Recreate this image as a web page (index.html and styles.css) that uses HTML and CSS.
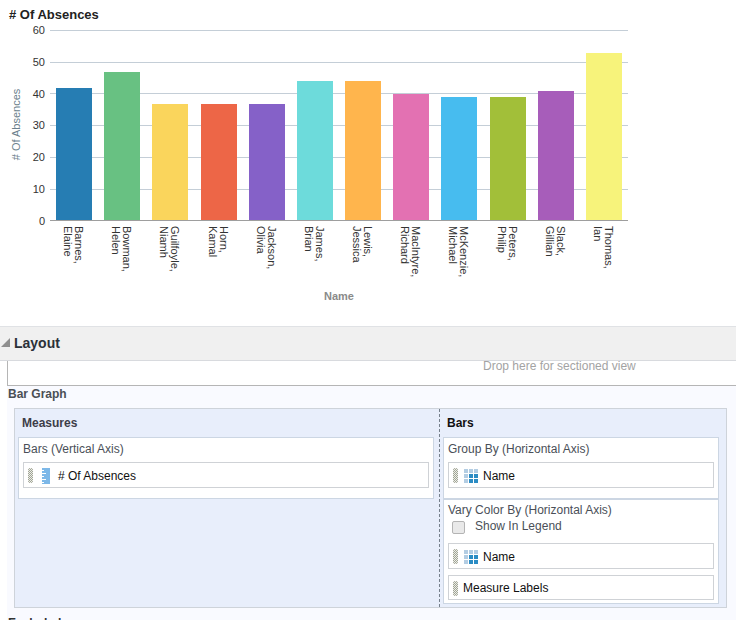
FILE: index.html
```html
<!DOCTYPE html>
<html lang="en">
<head>
    <meta charset="UTF-8">
    <title># Of Absences</title>
    <link rel="stylesheet" href="styles.css">
</head>
<body>

    <!-- Chart -->
    <section class="chart-area">
        <h2 class="chart-title"># Of Absences</h2>
        <svg class="chart" width="736" height="304" viewBox="0 22 736 304">
            <g class="grid">
                <line x1="50" x2="628" y1="30.5" y2="30.5"/>
                <line x1="50" x2="628" y1="62.5" y2="62.5"/>
                <line x1="50" x2="628" y1="93.5" y2="93.5"/>
                <line x1="50" x2="628" y1="125.5" y2="125.5"/>
                <line x1="50" x2="628" y1="157.5" y2="157.5"/>
                <line x1="50" x2="628" y1="189.5" y2="189.5"/>
            </g>
            <g class="ticks">
                <text x="45" y="34">60</text>
                <text x="45" y="66">50</text>
                <text x="45" y="98">40</text>
                <text x="45" y="129">30</text>
                <text x="45" y="161">20</text>
                <text x="45" y="193">10</text>
                <text x="45" y="225">0</text>
            </g>
            <rect x="56" y="88" width="36" height="133" fill="#267db3"/>
            <rect x="104" y="72" width="36" height="149" fill="#68c182"/>
            <rect x="152" y="104" width="36" height="117" fill="#fad55c"/>
            <rect x="201" y="104" width="36" height="117" fill="#ed6647"/>
            <rect x="249" y="104" width="36" height="117" fill="#8561c8"/>
            <rect x="297" y="81" width="36" height="140" fill="#6ddbdb"/>
            <rect x="345" y="81" width="36" height="140" fill="#ffb54d"/>
            <rect x="393" y="94" width="36" height="127" fill="#e371b2"/>
            <rect x="441" y="97" width="36" height="124" fill="#47bcef"/>
            <rect x="490" y="97" width="36" height="124" fill="#a2bf39"/>
            <rect x="538" y="91" width="36" height="130" fill="#a75dba"/>
            <rect x="586" y="53" width="36" height="168" fill="#f7f37b"/>
            <line class="axis" x1="50" x2="628" y1="220.5" y2="220.5"/>
            <text class="axis-title" transform="translate(20 124.5) rotate(-90)"># Of Absences</text>
            <g class="names">
                <text transform="translate(75 226) rotate(90)">Barnes,</text>
                <text transform="translate(64 226) rotate(90)">Elaine</text>
                <text transform="translate(123 226) rotate(90)">Bowman,</text>
                <text transform="translate(112 226) rotate(90)">Helen</text>
                <text transform="translate(171 226) rotate(90)">Guilfoyle,</text>
                <text transform="translate(160 226) rotate(90)">Niamh</text>
                <text transform="translate(220 226) rotate(90)">Horn,</text>
                <text transform="translate(209 226) rotate(90)">Kamal</text>
                <text transform="translate(268 226) rotate(90)">Jackson,</text>
                <text transform="translate(257 226) rotate(90)">Olivia</text>
                <text transform="translate(316 226) rotate(90)">James,</text>
                <text transform="translate(305 226) rotate(90)">Brian</text>
                <text transform="translate(364 226) rotate(90)">Lewis,</text>
                <text transform="translate(353 226) rotate(90)">Jessica</text>
                <text transform="translate(412 226) rotate(90)">MacIntyre,</text>
                <text transform="translate(401 226) rotate(90)">Richard</text>
                <text transform="translate(460 226) rotate(90)">McKenzie,</text>
                <text transform="translate(449 226) rotate(90)">Michael</text>
                <text transform="translate(509 226) rotate(90)">Peters,</text>
                <text transform="translate(498 226) rotate(90)">Philip</text>
                <text transform="translate(557 226) rotate(90)">Slack,</text>
                <text transform="translate(546 226) rotate(90)">Gillian</text>
                <text transform="translate(605 226) rotate(90)">Thomas,</text>
                <text transform="translate(594 226) rotate(90)">Ian</text>
            </g>
            <text class="x-title" x="339" y="300">Name</text>
        </svg>
    </section>

    <!-- Layout -->
    <header class="layout-header">
        <span class="disclosure"></span>
        <h3>Layout</h3>
    </header>

    <div class="layout-body">
        <div class="sections-drop">Drop here for sectioned view</div>
        <div class="graph-label">Bar Graph</div>

        <div class="drop-panel">
            <div class="measures-col">
                <div class="col-title">Measures</div>
                <div class="target">
                    <div class="target-label">Bars (Vertical Axis)</div>
                    <div class="slot">
                        <span class="grip"></span>
                        <svg class="icon measure-icon" width="8" height="16" viewBox="0 0 8 16">
                            <rect width="8" height="16" fill="#7db8e8"/>
                            <path d="M0 2.5h2M0 5.5h4M0 8.5h2M0 11.5h4M0 14.5h2" stroke="#fff" fill="none"/>
                        </svg>
                        <span># Of Absences</span>
                    </div>
                </div>
            </div>

            <div class="bars-col">
                <div class="col-title bars-title">Bars</div>
                <div class="target">
                    <div class="target-label">Group By (Horizontal Axis)</div>
                    <div class="slot">
                        <span class="grip"></span>
                        <svg class="icon" width="14" height="14" viewBox="0 0 14 14">
                            <path fill="#b3cde3" d="M0 0h4v4H0zM5 0h4v4H5zM10 0h4v4h-4zM0 5h4v4H0zM0 10h4v4H0z"/>
                            <path fill="#2b8cc4" d="M5 5h4v4H5zM10 5h4v4h-4zM5 10h4v4H5zM10 10h4v4h-4z"/>
                        </svg>
                        <span>Name</span>
                    </div>
                </div>
                <div class="target vary">
                    <div class="target-label">Vary Color By (Horizontal Axis)</div>
                    <label class="legend-check"><span class="checkbox"></span>Show In Legend</label>
                    <div class="slot">
                        <span class="grip"></span>
                        <svg class="icon" width="14" height="14" viewBox="0 0 14 14">
                            <path fill="#b3cde3" d="M0 0h4v4H0zM5 0h4v4H5zM10 0h4v4h-4zM0 5h4v4H0zM0 10h4v4H0z"/>
                            <path fill="#2b8cc4" d="M5 5h4v4H5zM10 5h4v4h-4zM5 10h4v4H5zM10 10h4v4h-4z"/>
                        </svg>
                        <span>Name</span>
                    </div>
                    <div class="slot labels-slot">
                        <span class="grip"></span>
                        <span>Measure Labels</span>
                    </div>
                </div>
            </div>
        </div>

        <div class="graph-label excluded">Excluded</div>
    </div>

</body>
</html>
```

FILE: styles.css
```css
body {
    margin: 0;
    width: 736px;
    height: 620px;
    overflow: hidden;
    background-color: #fff;
    color: #222;
    font-family: "Liberation Sans", Arial, sans-serif;
    font-size: 12px;
}

/* Chart */
.chart-area {
    height: 326px;
}

.chart-title {
    margin: 0;
    padding: 7px 0 0 9px;
    height: 15px;
    font-size: 13px;
    line-height: 15px;
    font-weight: bold;
    color: #222;
}

.chart {
    display: block;
}

.grid line {
    stroke: #c4ced7;
    stroke-width: 1;
}

.axis {
    stroke: #9e9e9e;
    stroke-width: 1;
}

.ticks text {
    font-size: 11px;
    fill: #333;
    text-anchor: end;
}

.axis-title {
    font-size: 11px;
    fill: #6b7f8c;
    text-anchor: middle;
}

.names text {
    font-size: 11px;
    fill: #333;
}

.x-title {
    font-size: 11px;
    font-weight: bold;
    fill: #8a8a8a;
    text-anchor: middle;
}

/* Layout header */
.layout-header {
    height: 31px;
    padding-bottom: 2px;
    border-top: 1px solid #e0e2e5;
    border-bottom: 1px solid #d8dade;
    background-color: #f0f0f0;
    display: flex;
    align-items: center;
}

.layout-header h3 {
    margin: 0 0 0 4px;
    font-size: 14px;
    font-weight: bold;
    color: #2b3038;
}

.disclosure {
    margin-left: 1px;
    width: 0;
    height: 0;
    border-left: 9px solid transparent;
    border-bottom: 9px solid #8f8f8f;
}

/* Layout body */
.layout-body {
    margin-left: 7px;
    background-color: #f9faff;
}

.sections-drop {
    height: 25px;
    box-sizing: border-box;
    padding-left: 475px;
    background-color: #fff;
    border-left: 1px solid #b5b5b5;
    border-bottom: 1px solid #b5b5b5;
    color: #a3a3a3;
    line-height: 10px;
}

.graph-label {
    height: 22px;
    padding: 1px 0 0 1px;
    box-sizing: border-box;
    line-height: 14px;
    color: #4a4f55;
    font-weight: bold;
}

.drop-panel {
    margin-left: 7px;
    width: 713px;
    height: 200px;
    box-sizing: border-box;
    border: 1px solid #ced3da;
    background-color: #e8eefb;
    display: flex;
}

.measures-col {
    width: 425px;
    padding: 0 5px 0 3px;
    box-sizing: border-box;
    border-right: 1px dashed #76808c;
}

.bars-col {
    flex: 1;
    padding: 0 7px 0 3px;
}

.col-title {
    height: 28px;
    padding-left: 4px;
    line-height: 29px;
    font-weight: bold;
    color: #3d3d48;
}

.bars-title {
    color: #111;
}

.target {
    height: 62px;
    box-sizing: border-box;
    padding: 3px 4px 0;
    border: 1px solid #ccd6e3;
    background-color: #fff;
}

.target-label {
    height: 21px;
    line-height: 16px;
    color: #4a4f58;
}

.vary {
    height: 105px;
}

.vary .target-label {
    height: 14px;
    line-height: 15px;
}

.legend-check {
    height: 26px;
    padding: 1px 0 0 4px;
    box-sizing: border-box;
    display: flex;
    align-items: flex-start;
    line-height: 16px;
    color: #4a4f58;
}

.checkbox {
    width: 11px;
    height: 11px;
    margin: 3px 10px 0 0;
    border: 1px solid #b4b4b4;
    border-radius: 2px;
    background-color: #e9e9e9;
}

.slot {
    height: 26px;
    box-sizing: border-box;
    padding: 1px 0 0 4px;
    border: 1px solid #cfd2d6;
    background-color: #fff;
    display: flex;
    align-items: center;
    color: #111;
}

.labels-slot {
    margin-top: 6px;
    height: 25px;
}

.grip {
    width: 5px;
    height: 15px;
    margin-right: 6px;
    border-radius: 2px;
    background: repeating-conic-gradient(#a0a396 0 25%, #eceee6 0 50%) 0 0 / 2px 2px;
}

.labels-slot .grip {
    margin-right: 5px;
}

.measures-col .grip {
    margin-right: 9px;
}

.icon {
    margin-right: 5px;
}

.measure-icon {
    margin-right: 8px;
}

.excluded {
    margin-top: 7px;
    color: #333;
}
```
